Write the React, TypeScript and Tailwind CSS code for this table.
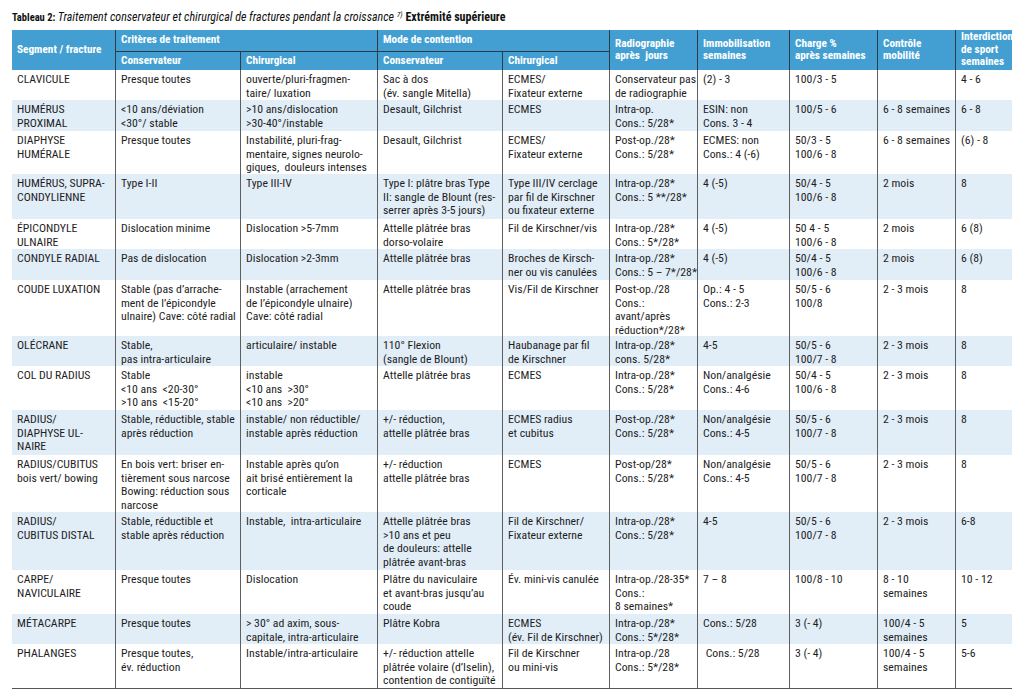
import React from 'react';

type Row = string[][];

const cols = 'grid-cols-[103px_125px_137px_125px_107px_88px_92px_88px_78px_63px]';

const rows: { h: string; cells: Row }[] = [
  {
    h: 'h-[30px]',
    cells: [
      ['CLAVICULE'],
      ['Presque toutes'],
      ['ouverte/pluri-fragmen-', 'taire/ luxation'],
      ['Sac à dos', '(év. sangle Mitella)'],
      ['ECMES/', 'Fixateur externe'],
      ['Conservateur pas', 'de radiographie'],
      ['(2) - 3'],
      ['100/3 - 5'],
      [],
      ['4 - 6'],
    ],
  },
  {
    h: 'h-[31px]',
    cells: [
      ['HUMÉRUS', 'PROXIMAL'],
      ['<10 ans/déviation', '<30°/ stable'],
      ['>10 ans/dislocation', '>30-40°/instable'],
      ['Desault, Gilchrist'],
      ['ECMES'],
      ['Intra-op.', 'Cons.: 5/28*'],
      ['ESIN: non', 'Cons. 3 - 4'],
      ['100/5 - 6'],
      ['6 - 8 semaines'],
      ['6 - 8'],
    ],
  },
  {
    h: 'h-[43px]',
    cells: [
      ['DIAPHYSE', 'HUMÉRALE'],
      ['Presque toutes'],
      ['Instabilité, pluri-frag-', 'mentaire, signes neurolo-', 'giques,  douleurs intenses'],
      ['Desault, Gilchrist'],
      ['ECMES/', 'Fixateur externe'],
      ['Post-op./28*', 'Cons.: 5/28*'],
      ['ECMES: non', 'Cons.: 4 (-6)'],
      ['50/3 - 5', '100/6 - 8'],
      ['6 - 8 semaines'],
      ['(6) - 8'],
    ],
  },
  {
    h: 'h-[45px]',
    cells: [
      ['HUMÉRUS, SUPRA-', 'CONDYLIENNE'],
      ['Type I-II'],
      ['Type III-IV'],
      ['Type I: plâtre bras Type', 'II: sangle de Blount (res-', 'serrer après 3-5 jours)'],
      ['Type III/IV cerclage', 'par fil de Kirschner', 'ou fixateur externe'],
      ['Intra-op./28*', 'Cons.: 5 **/28*'],
      ['4 (-5)'],
      ['50/4 - 5', '100/6 - 8'],
      ['2 mois'],
      ['8'],
    ],
  },
  {
    h: 'h-[30px]',
    cells: [
      ['ÉPICONDYLE', 'ULNAIRE'],
      ['Dislocation minime'],
      ['Dislocation >5-7mm'],
      ['Attelle plâtrée bras', 'dorso-volaire'],
      ['Fil de Kirschner/vis'],
      ['Intra-op./28*', 'Cons.: 5*/28*'],
      ['4 (-5)'],
      ['50 4 - 5', '100/6 - 8'],
      ['2 mois'],
      ['6 (8)'],
    ],
  },
  {
    h: 'h-[31px]',
    cells: [
      ['CONDYLE RADIAL'],
      ['Pas de dislocation'],
      ['Dislocation >2-3mm'],
      ['Attelle plâtrée bras'],
      ['Broches de Kirsch-', 'ner ou vis canulées'],
      ['Intra-op./28*', 'Cons.: 5 – 7*/28*'],
      ['4 (-5)'],
      ['50/4 - 5', '100/6 - 8'],
      ['2 mois'],
      ['6 (8)'],
    ],
  },
  {
    h: 'h-[56px]',
    cells: [
      ['COUDE LUXATION'],
      ['Stable (pas d’arrache-', 'ment de l’épicondyle', 'ulnaire) Cave: côté radial'],
      ['Instable (arrachement', 'de l’épicondyle ulnaire)', 'Cave: côté radial'],
      ['Attelle plâtrée bras'],
      ['Vis/Fil de Kirschner'],
      ['Post-op./28', 'Cons.:', 'avant/après', 'réduction*/28*'],
      ['Op.: 4 - 5', 'Cons.: 2-3'],
      ['50/5 - 6', '100/8'],
      ['2 - 3 mois'],
      ['8'],
    ],
  },
  {
    h: 'h-[30px]',
    cells: [
      ['OLÉCRANE'],
      ['Stable,', 'pas intra-articulaire'],
      ['articulaire/ instable'],
      ['110° Flexion', '(sangle de Blount)'],
      ['Haubanage par fil', 'de Kirschner'],
      ['Intra-op./28*', 'cons. 5/28*'],
      ['4-5'],
      ['50/5 - 6', '100/7 - 8'],
      ['2 - 3 mois'],
      ['8'],
    ],
  },
  {
    h: 'h-[44px]',
    cells: [
      ['COL DU RADIUS'],
      ['Stable', '<10 ans  <20-30°', '>10 ans  <15-20°'],
      ['instable', '<10 ans  >30°', '<10 ans  >20°'],
      ['Attelle plâtrée bras'],
      ['ECMES'],
      ['Intra-op./28*', 'Cons.: 5/28*'],
      ['Non/analgésie', 'Cons.: 4-6'],
      ['50/4 - 5', '100/6 - 8'],
      ['2 - 3 mois'],
      ['8'],
    ],
  },
  {
    h: 'h-[45px]',
    cells: [
      ['RADIUS/', 'DIAPHYSE UL-', 'NAIRE'],
      ['Stable, réductible, stable', 'après réduction'],
      ['instable/ non réductible/', 'instable après réduction'],
      ['+/- réduction,', 'attelle plâtrée bras'],
      ['ECMES radius', 'et cubitus'],
      ['Post-op./28*', 'Cons.: 5/28*'],
      ['Non/analgésie', 'Cons.: 4-5'],
      ['50/5 - 6', '100/7 - 8'],
      ['2 - 3 mois'],
      ['8'],
    ],
  },
  {
    h: 'h-[57px]',
    cells: [
      ['RADIUS/CUBITUS', 'bois vert/ bowing'],
      ['En bois vert: briser en-', 'tièrement sous narcose', 'Bowing: réduction sous', 'narcose'],
      ['Instable après qu’on', 'ait brisé entièrement la', 'corticale'],
      ['+/- réduction', 'attelle plâtrée bras'],
      ['ECMES'],
      ['Post-op/28*', 'Cons.: 5/28*'],
      ['Non/analgésie', 'Cons.: 4-5'],
      ['50/5 - 6', '100/7 - 8'],
      ['2 - 3 mois'],
      ['8'],
    ],
  },
  {
    h: 'h-[58px]',
    cells: [
      ['RADIUS/', 'CUBITUS DISTAL'],
      ['Stable, réductible et', 'stable après réduction'],
      ['Instable,  intra-articulaire'],
      ['Attelle plâtrée bras', '>10 ans et peu', 'de douleurs: attelle', 'plâtrée avant-bras'],
      ['Fil de Kirschner/', 'Fixateur externe'],
      ['Intra-op./28*', 'Cons.: 5/28*'],
      ['4-5'],
      ['50/5 - 6', '100/7 - 8'],
      ['2 - 3 mois'],
      ['6-8'],
    ],
  },
  {
    h: 'h-[44px]',
    cells: [
      ['CARPE/', 'NAVICULAIRE'],
      ['Presque toutes'],
      ['Dislocation'],
      ['Plâtre du naviculaire', 'et avant-bras jusqu’au', 'coude'],
      ['Év. mini-vis canulée'],
      ['Intra-op./28-35*', 'Cons.:', '8 semaines*'],
      ['7 – 8'],
      ['100/8 - 10'],
      ['8 - 10', 'semaines'],
      ['10 - 12'],
    ],
  },
  {
    h: 'h-[30px]',
    cells: [
      ['MÉTACARPE'],
      ['Presque toutes'],
      ['> 30° ad axim, sous-', 'capitale, intra-articulaire'],
      ['Plâtre Kobra'],
      ['ECMES', '(év. Fil de Kirschner)'],
      ['Intra-op./28*', 'Cons.: 5*/28*'],
      ['Cons.: 5/28'],
      ['3 (- 4)'],
      ['100/4 - 5', 'semaines'],
      ['5'],
    ],
  },
  {
    h: 'h-[44px]',
    cells: [
      ['PHALANGES'],
      ['Presque toutes,', 'év. réduction'],
      ['Instable/intra-articulaire'],
      ['+/- réduction attelle', 'plâtrée volaire (d’Iselin),', 'contention de contiguïté'],
      ['Fil de Kirschner', 'ou mini-vis'],
      ['Intra-op./28', 'Cons.: 5*/28*'],
      [' Cons.: 5/28'],
      ['3 (- 4)'],
      ['100/4 - 5', 'semaines'],
      ['5-6'],
    ],
  },
];

const HeadCell = ({ lines, className = '' }: { lines: string[]; className?: string }) => (
  <div className={`flex flex-col justify-center px-[5px] ${className}`}>
    {lines.map((l) => (
      <div key={l} className="whitespace-pre">
        {l}
      </div>
    ))}
  </div>
);

export default function App() {
  return (
    <div className="min-h-[696px] bg-white px-[12px] text-[#1e1e1e] [font-family:'Liberation_Sans_Narrow','Arial_Narrow','Roboto_Condensed','Liberation_Sans',sans-serif]">
      <div className="h-[30px] whitespace-nowrap pt-[10px] text-[12px] leading-[15px] text-[#111]">
        <span className="text-[10.5px] font-bold">Tableau 2: </span>
        <span className="italic">
          Traitement conservateur et chirurgical de fractures pendant la croissance{' '}
          <sup className="text-[7.5px]">7)</sup>
        </span>{' '}
        <span className="font-bold">Extrémité supérieure</span>
      </div>

      <div className={`grid ${cols} grid-rows-[22px_18px] bg-[#439fd2] text-[11.25px] font-bold leading-[12.5px] text-white`}>
        <HeadCell lines={['Segment / fracture']} className="row-span-2" />
        <HeadCell lines={['Critères de traitement']} className="col-span-2 border-b border-l border-[#2c3b47]" />
        <HeadCell lines={['Mode de contention']} className="col-span-2 border-b border-l border-[#2c3b47]" />
        <HeadCell lines={['Radiographie', 'après  jours']} className="row-span-2 border-l border-[#2c3b47]" />
        <HeadCell lines={['Immobilisation', 'semaines']} className="row-span-2 border-l border-[#2c3b47]" />
        <HeadCell lines={['Charge %', 'après semaines']} className="row-span-2 border-l border-[#2c3b47]" />
        <HeadCell lines={['Contrôle', 'mobilité']} className="row-span-2 border-l border-[#2c3b47]" />
        <HeadCell lines={['Interdiction', 'de sport', 'semaines']} className="row-span-2 border-l border-[#2c3b47]" />
        <HeadCell lines={['Conservateur']} className="col-start-2 row-start-2 border-l border-[#2c3b47] pt-[1px]" />
        <HeadCell lines={['Chirurgical']} className="col-start-3 row-start-2 border-l border-[#2c3b47] pt-[1px]" />
        <HeadCell lines={['Conservateur']} className="col-start-4 row-start-2 border-l border-[#2c3b47] pt-[1px]" />
        <HeadCell lines={['Chirurgical']} className="col-start-5 row-start-2 border-l border-[#2c3b47] pt-[1px]" />
      </div>

      <div className="border-b border-[#555] text-[11.75px] leading-[13.7px]">
        {rows.map((row, i) => (
          <div key={i} className={`grid ${cols} ${row.h} ${i % 2 === 1 ? 'bg-[#e1edf7]' : 'bg-white'}`}>
            {row.cells.map((cell, j) => (
              <div key={j} className={`px-[5px] pt-[3px] ${j > 0 ? 'border-l border-[#5f5f5f]' : ''}`}>
                {cell.map((l, k) => (
                  <div key={k} className="whitespace-pre">
                    {l}
                  </div>
                ))}
              </div>
            ))}
          </div>
        ))}
      </div>
    </div>
  );
}
